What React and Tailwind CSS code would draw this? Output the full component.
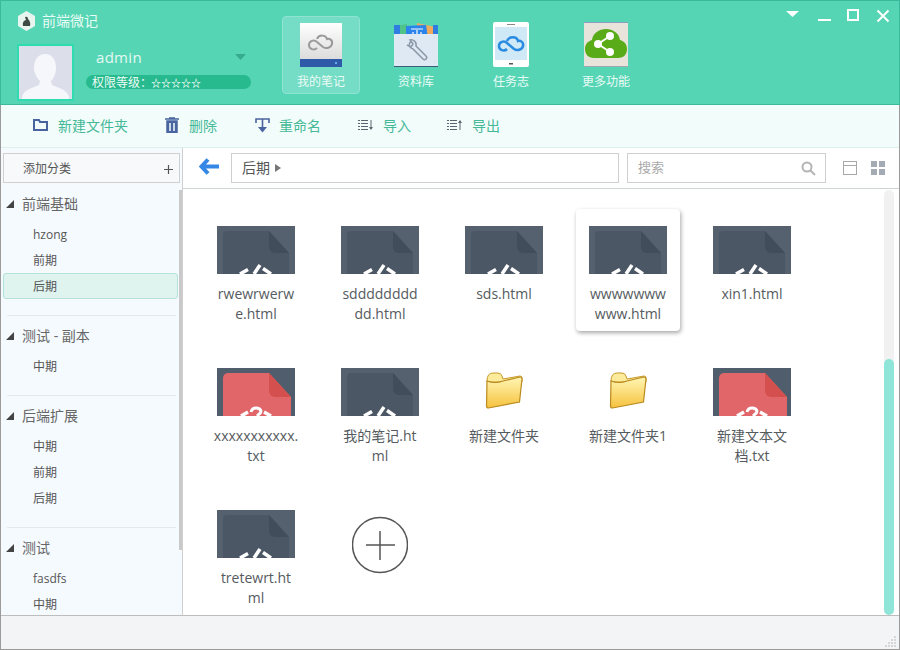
import React from 'react';

const FONT = '"Open Sans","Noto Sans CJK SC",sans-serif';

const DocIcon = ({ red }) => (
  <svg width="78" height="48" viewBox="0 0 78 48" className="block">
    <rect width="78" height="48" fill={red ? '#4f5d6c' : '#56616f'} />
    {red ? (
      <>
        <path d="M6 10a5 5 0 0 1 5-5h41l22 24v19H6z" fill="#e0666a" />
        <path d="M52 5l22 24H58a6 6 0 0 1-6-6z" fill="#d4504f" />
        <path d="M24 48l7-4M54 48l-7-4" stroke="#fff" strokeWidth="3.5" fill="none" />
        <path d="M34 44q1-4 5-4t5 3q0 2-3 4v2" stroke="#fff" strokeWidth="3" fill="none" />
      </>
    ) : (
      <>
        <path d="M6 9a4 4 0 0 1 4-4h42l20 22v21H6z" fill="#4c5766" />
        <path d="M52 5l20 22H58a6 6 0 0 1-6-6z" fill="#424d5c" />
        <path d="M23 48l8-4.500M54 48l-8-5.500" stroke="#fff" strokeWidth="3.500" fill="none" />
        <path d="M37 48l6-9" stroke="#fff" strokeWidth="3.500" fill="none" />
      </>
    )}
  </svg>
);

const FolderIcon = () => (
  <svg width="40" height="40" viewBox="0 0 40 40" className="block mt-[3px]">
    <defs>
      <linearGradient id="fold" x1="0" y1="0" x2="0" y2="1">
        <stop offset="0" stopColor="#fff6b4" />
        <stop offset="1" stopColor="#f6c23e" />
      </linearGradient>
    </defs>
    <path d="M3 10q0-8 6-8h5q3 0 4 3l1 3 17-3q2 0 2 2v4H3z" fill="#fdeb9c" stroke="#c8992b" strokeWidth="1" />
    <path d="M3 10q8 3 16 0l17-4q2 0 2 2l-2.500 23-31 6q-2 0-2-2z" fill="url(#fold)" stroke="#b98a1e" strokeWidth="1.2" />
  </svg>
);

const AddIcon = () => (
  <svg width="56" height="58" viewBox="0 0 56 58" className="block">
    <circle cx="28" cy="29" r="27.500" fill="none" stroke="#555" strokeWidth="1.5" />
    <path d="M28 15v29M14 29h29" stroke="#555" strokeWidth="1.5" />
  </svg>
);

const NotesIcon = () => (
  <svg width="42" height="44" viewBox="0 0 42 44">
    <defs>
      <linearGradient id="nb" x1="0" y1="0" x2="0" y2="1">
        <stop offset="0" stopColor="#ffffff" />
        <stop offset="1" stopColor="#dcdcdc" />
      </linearGradient>
    </defs>
    <rect width="42" height="36" fill="url(#nb)" />
    <rect y="36" width="42" height="8" fill="#2f5aa8" />
    <circle cx="36" cy="40" r="1" fill="#7cc8ff" />
    <path d="M18 4h.1M21 4h.1M24 4h.1" stroke="#888" strokeWidth="1" />
    <path d="M17 25c-3 3-8 1-8-3s5-6 8-3l6 5c3 2 8 1 9-3s-3-6-5-5c-1-4-8-5-10 0" fill="none" stroke="#9a9a9a" strokeWidth="2" />
  </svg>
);

const LibraryIcon = () => (
  <svg width="46" height="46" viewBox="0 0 46 46">
    <path d="M2 4l12-2v14H2z" fill="#4fc38a" />
    <path d="M24 1l18 4-2 12H24z" fill="#f3a95c" />
    <path d="M13 4l20-1 2 13H13z" fill="#2b84ea" />
    <path d="M1 3h6v9H1zM40 3h5v9h-5z" fill="#2f7de0" />
    <path d="M18 7h12M20 10v5M24 8v7M28 10v5" stroke="#fff" strokeWidth="1.2" />
    <path d="M1 12h44v32H1z" fill="#dfe9f3" />
    <rect x="1" y="44" width="44" height="1" fill="#3d5a78" />
    <path d="M18 19c-3 3-2 7 2 8l10 10c2 2 5-1 3-3L23 24c1-4-3-7-6-6l3 4-2 3-4-2" fill="none" stroke="#8a98a8" strokeWidth="1.5" />
    <path d="M5 16h.1M41 16h.1M5 40h.1M41 40h.1" stroke="#666" strokeWidth="1.5" />
  </svg>
);

const TaskIcon = () => (
  <svg width="36" height="45" viewBox="0 0 36 45">
    <rect width="36" height="45" rx="2" fill="#fff" />
    <rect x="2" y="5" width="32" height="33" fill="#cfe9f7" />
    <rect x="14" y="2" width="8" height="1" fill="#888" />
    <rect x="16" y="41" width="4" height="1.5" fill="#555" />
    <path d="M14 27c-3 3-8 1-8-3s5-6 8-3l7 6c3 2 8 1 9-3s-3-6-5-5c-1-5-9-5-11 0" fill="none" stroke="#2a8be0" strokeWidth="2.5" />
  </svg>
);

const MoreIcon = () => (
  <svg width="44" height="45" viewBox="0 0 44 45">
    <rect width="44" height="45" fill="#e8e4dc" />
    <path d="M0 0h44" stroke="#2f5aa8" strokeWidth="1" />
    <path d="M0 45h44" stroke="#5a6a80" strokeWidth="1" />
    <path d="M10 36c-6 0-9-4-9-9s3-8 7-9c1-7 7-11 14-11s13 4 14 11c4 1 7 4 7 9s-3 9-9 9z" fill="#59ab17" />
    <circle cx="14" cy="22" r="4" fill="#fff" />
    <circle cx="26" cy="14" r="4" fill="#fff" />
    <circle cx="26" cy="30" r="4" fill="#fff" />
    <path d="M14 22l12-8M14 22l12 8" stroke="#fff" strokeWidth="2" />
  </svg>
);

const NAV = [
  { label: '我的笔记', icon: <NotesIcon />, active: true },
  { label: '资料库', icon: <LibraryIcon /> },
  { label: '任务志', icon: <TaskIcon /> },
  { label: '更多功能', icon: <MoreIcon /> },
];

const TOOLS = [
  {
    label: '新建文件夹',
    w: 'w-[131px]',
    icon: (
      <svg width="15" height="14" viewBox="0 0 15 14"><path d="M1 2h5l1 2h7v8H1z" fill="none" stroke="#4a64a0" strokeWidth="2" /></svg>
    ),
  },
  {
    label: '删除',
    w: 'w-[90px]',
    icon: (
      <svg width="15" height="16" viewBox="0 0 15 16" className="ml-[1px]"><path d="M0 2h14M4 1h6M2 4h10v12H2z" stroke="#4a64a0" strokeWidth="1.5" fill="#4a64a0" /><path d="M5 6v8M9 6v8" stroke="#f2fdfb" strokeWidth="1.5" /></svg>
    ),
  },
  {
    label: '重命名',
    w: 'w-[104px]',
    icon: (
      <svg width="15" height="15" viewBox="0 0 15 15" className="ml-[1px]"><path d="M1 5V1h13v4M7.5 1v11" fill="none" stroke="#4a64a0" strokeWidth="1.6" /><path d="M3 9h9l-4.500 5.500z" fill="#4a64a0" /></svg>
    ),
  },
  {
    label: '导入',
    w: 'w-[89px]',
    icon: (
      <svg width="16" height="12" viewBox="0 0 16 12"><path d="M0 1.500h10M0 4.500h10M0 7.500h10M0 10.500h10" stroke="#5c6470" strokeDasharray="2 1 7 0" /><path d="M13 1v9" stroke="#5c6470" /><path d="M11 8h4l-2 3z" fill="#5c6470" /></svg>
    ),
  },
  {
    label: '导出',
    w: 'w-[80px]',
    icon: (
      <svg width="16" height="12" viewBox="0 0 16 12"><path d="M0 1.500h10M0 4.500h10M0 7.500h10M0 10.500h10" stroke="#5c6470" strokeDasharray="2 1 7 0" /><path d="M13 2v9" stroke="#5c6470" /><path d="M11 4h4l-2-3z" fill="#5c6470" /></svg>
    ),
  },
];

const GROUPS = [
  { name: '前端基础', items: ['hzong', '前期', '后期'] },
  { name: '测试 - 副本', items: ['中期'] },
  { name: '后端扩展', items: ['中期', '前期', '后期'] },
  { name: '测试', items: ['fasdfs', '中期'] },
];

const FILES = [
  { lines: ['rwewrwerw', 'e.html'], type: 'doc' },
  { lines: ['sdddddddd', 'dd.html'], type: 'doc' },
  { lines: ['sds.html'], type: 'doc' },
  { lines: ['wwwwwww', 'www.html'], type: 'doc', selected: true },
  { lines: ['xin1.html'], type: 'doc' },
  { lines: ['xxxxxxxxxxx.', 'txt'], type: 'txt' },
  { lines: ['我的笔记.ht', 'ml'], type: 'doc' },
  { lines: ['新建文件夹'], type: 'folder' },
  { lines: ['新建文件夹1'], type: 'folder' },
  { lines: ['新建文本文', '档.txt'], type: 'txt' },
  { lines: ['tretewrt.ht', 'ml'], type: 'doc' },
];

const FileCard = ({ file }) => (
  <div
    className={`w-[104px] h-[122px] pt-[17px] flex flex-col items-center rounded ${
      file.selected ? 'shadow-[1px_2px_4px_rgba(0,0,0,0.35)] bg-white' : ''
    }`}
  >
    <div className="h-[48px] flex items-start justify-center">
      {file.type === 'folder' ? <FolderIcon /> : <DocIcon red={file.type === 'txt'} />}
    </div>
    <div className="mt-[10px] text-center text-[14px] leading-[20px] text-[#555b60] whitespace-nowrap">
      {file.lines.map((l) => (
        <div key={l}>{l}</div>
      ))}
    </div>
  </div>
);

export default function App() {
  return (
    <div className="w-[900px] h-[650px] flex flex-col overflow-hidden bg-white" style={{ fontFamily: FONT }}>
      {/* header */}
      <header className="h-[105px] shrink-0 flex bg-[#56d5b4] border border-[#3cb99b] pl-[16px]">
        <div className="w-[265px] shrink-0">
          <div className="flex items-center h-[40px]">
            <svg width="19" height="20" viewBox="0 0 19 20">
              <path d="M9.500 0l8.500 5v10l-8.500 5L1 15V5z" fill="#e8f5ef" />
              <path d="M6 15q-1-5 3-6l-1-3q3-1 3 2 3 3 2 7z" fill="#3d4a42" />
            </svg>
            <span className="ml-[6px] text-[14px] leading-none text-[#e9fbf5]">前端微记</span>
          </div>
          <div className="flex mt-[3px]">
            <div className="w-[57px] h-[57px] border-2 border-[#2fdcb0] bg-[#dcdfea] overflow-hidden">
              <svg width="53" height="53" viewBox="0 0 53 53" className="block">
                <path d="M26 8c7 0 11 6 11 14 0 5-2 10-5 13l1 4c6 3 15 4 17 12v2H3v-2c2-8 11-9 17-12l1-4c-3-3-6-8-6-13 0-8 4-14 11-14z" fill="#f6f7fb" />
              </svg>
            </div>
            <div className="ml-[12px] w-[165px]">
              <div className="flex items-center h-[26px]">
                <span className="ml-[10px] text-[15px] text-[#e4f9f3] tracking-[0.3px]">admin</span>
                <svg width="11" height="6" viewBox="0 0 11 6" className="ml-auto mr-[5px]">
                  <path d="M0 0h11L5.500 6z" fill="#35ac8b" />
                </svg>
              </div>
              <div className="mt-[5px] h-[14px] rounded-full bg-[#27ba8e] flex items-center pl-[6px] pt-[1px] text-[12px] leading-none text-[#eefcf7] whitespace-nowrap">
                权限等级：<span className="text-[10px] font-bold -ml-[1px] text-white">☆☆☆☆☆</span>
              </div>
            </div>
          </div>
        </div>
        <nav className="flex gap-[17px] mt-[15px] h-[78px]">
          {NAV.map((n) => (
            <div
              key={n.label}
              className={`w-[78px] h-[78px] flex flex-col items-center rounded border ${
                n.active ? 'bg-[#75dcc5] border-[#8ee3d1]' : 'border-transparent'
              }`}
            >
              <div className="h-[45px] mt-[5px] flex items-center justify-center">{n.icon}</div>
              <span className="mt-[6px] text-[12px] leading-[18px] text-[#eafbf6]">{n.label}</span>
            </div>
          ))}
        </nav>
        <div className="ml-auto flex items-start pt-[8px] pr-[9px] gap-[16px]">
          <svg width="14" height="14" viewBox="0 0 14 14" className="mr-[1px]"><path d="M0 2h13L6.500 8z" fill="#fff" /></svg>
          <svg width="14" height="14" viewBox="0 0 14 14"><path d="M1 11h13" stroke="#fff" strokeWidth="2" /></svg>
          <svg width="13" height="14" viewBox="0 0 13 14"><rect x="1" y="1" width="10" height="10" fill="none" stroke="#fff" strokeWidth="2" /></svg>
          <svg width="14" height="14" viewBox="0 0 14 14"><path d="M1.500 1.500l11 11M12.500 1.500l-11 11" stroke="#fff" strokeWidth="2" /></svg>
        </div>
      </header>

      <div className="flex-1 min-h-0 flex flex-col border-x border-b border-[#9a9a9a]">
        {/* toolbar */}
        <div className="h-[43px] shrink-0 flex items-center pl-[32px] pb-[2px] bg-[#f2fdfb] border-b border-[#dcefea]">
          {TOOLS.map((t) => (
            <div key={t.label} className={`${t.w} flex items-center shrink-0`}>
              <span className="w-[25px] shrink-0 flex items-center">{t.icon}</span>
              <span className="text-[14px] text-[#45b897]">{t.label}</span>
            </div>
          ))}
        </div>

        <div className="flex-1 min-h-0 flex">
          {/* sidebar */}
          <aside className="relative w-[182px] shrink-0 bg-[#f5faff] border-r border-[#cfcfcf] overflow-hidden">
            <div className="pt-[5px] pl-[2px] pr-[2px]">
              <div className="h-[30px] w-[177px] flex items-center justify-between pl-[19px] pr-[6px] pt-[2px] bg-[#f7f9fa] border border-[#d0d0d0] text-[12px] text-[#555]">
                <span>添加分类</span>
                <svg width="9" height="9" viewBox="0 0 9 9"><path d="M4.500 0v9M0 4.500h9" stroke="#555" strokeWidth="1.200" /></svg>
              </div>
            </div>
            <div className="mt-[6px]">
              {GROUPS.map((g, i) => (
                <div key={g.name + i} className="pt-[5px] pb-[16px] border-b border-[#e4e9ec] mx-[6px] first:pt-0 last:border-b-0">
                  <div className="h-[30px] flex items-center pb-[2px] -ml-[1px] text-[14px] text-[#666]">
                    <svg width="8" height="8" viewBox="0 0 8 8" className="mr-[8px] mt-[2px]"><path d="M8 0v8H0z" fill="#444" /></svg>
                    {g.name}
                  </div>
                  <div className="mt-[2px]">
                    {g.items.map((it) => {
                      const sel = i === 0 && it === '后期';
                      return (
                        <div
                          key={it}
                          className={`h-[26px] flex items-center pt-[2px] text-[12px] text-[#555] -mx-[4px] pl-[29px] w-[175px] rounded-[3px] border ${
                            sel ? 'bg-[#dff3ef] border-[#b5e2d8]' : 'border-transparent'
                          }`}
                        >
                          {it}
                        </div>
                      );
                    })}
                  </div>
                </div>
              ))}
            </div>
            <div className="absolute left-[178px] top-[42px] w-[3px] h-[360px] bg-[#c9c9c9]" />
          </aside>

          {/* main */}
          <main className="relative flex-1 min-w-0 flex flex-col overflow-hidden">
            <div className="h-[41px] shrink-0 flex items-start pl-[16px] pt-[5px] border-b border-[#cfd4d4]">
              <svg width="20" height="17" viewBox="0 0 20 17" className="mt-[5px]">
                <path d="M9 1.500L2.500 8.500l6.500 7M3 8.500h17" fill="none" stroke="#3587e6" strokeWidth="4" />
              </svg>
              <div className="ml-[12px] w-[388px] h-[30px] flex items-center pl-[10px] pb-[2px] bg-white border border-[#cfcfcf] text-[14px] text-[#555]">
                后期
                <svg width="6" height="8" viewBox="0 0 6 8" className="ml-[5px] mt-[2px]"><path d="M0 0l6 4-6 4z" fill="#777" /></svg>
              </div>
              <div className="ml-[8px] w-[199px] h-[30px] flex items-center justify-between pl-[10px] pr-[9px] bg-white border border-[#cfcfcf] text-[13px] text-[#aaa]">
                搜索
                <svg width="15" height="15" viewBox="0 0 15 15"><circle cx="6" cy="6" r="4.500" fill="none" stroke="#b4b4b4" strokeWidth="2" /><path d="M9.500 9.500L14 14" stroke="#b4b4b4" strokeWidth="2" /></svg>
              </div>
              <svg width="14" height="14" viewBox="0 0 14 14" className="ml-[17px] mt-[8px]">
                <rect x=".5" y=".5" width="13" height="13" fill="none" stroke="#a8a8a8" />
                <path d="M0 4.500h14" stroke="#a8a8a8" />
              </svg>
              <svg width="14" height="14" viewBox="0 0 14 14" className="ml-[14px] mt-[8px]">
                <path d="M0 0h6v6H0zM8 0h6v6H8zM0 8h6v6H0zM8 8h6v6H8z" fill="#a4abb4" />
              </svg>
            </div>
            <div className="flex-1 min-h-0 pl-[21px] pt-[20px] overflow-hidden">
              <div className="grid grid-cols-[repeat(5,104px)] auto-rows-[122px] gap-x-[20px] gap-y-[20px]">
                {FILES.map((f) => (
                  <FileCard key={f.lines.join('')} file={f} />
                ))}
                <div className="h-[122px] pt-[23px] flex justify-center">
                  <AddIcon />
                </div>
              </div>
            </div>
            {/* scrollbar */}
            <div className="absolute right-[5px] top-[42px] bottom-0 w-[10px] bg-[#f1f1f1] rounded-full">
              <div className="absolute left-0 right-0 bottom-0 h-[256px] bg-[#8fe6d8] rounded-full" />
            </div>
          </main>
        </div>

        {/* footer */}
        <footer className="relative h-[34px] shrink-0 bg-[#f3f4f6] border-t border-[#bdbdbd]">
          <svg width="12" height="12" viewBox="0 0 12 12" className="absolute right-[2px] bottom-[2px]">
            <path d="M9 1h2v2H9zM6 4h2v2H6zM9 4h2v2H9zM3 7h2v2H3zM6 7h2v2H6zM9 7h2v2H9zM0 10h2v2H0zM3 10h2v2H3zM6 10h2v2H6zM9 10h2v2H9z" fill="#d4d6d9" />
          </svg>
        </footer>
      </div>
    </div>
  );
}
